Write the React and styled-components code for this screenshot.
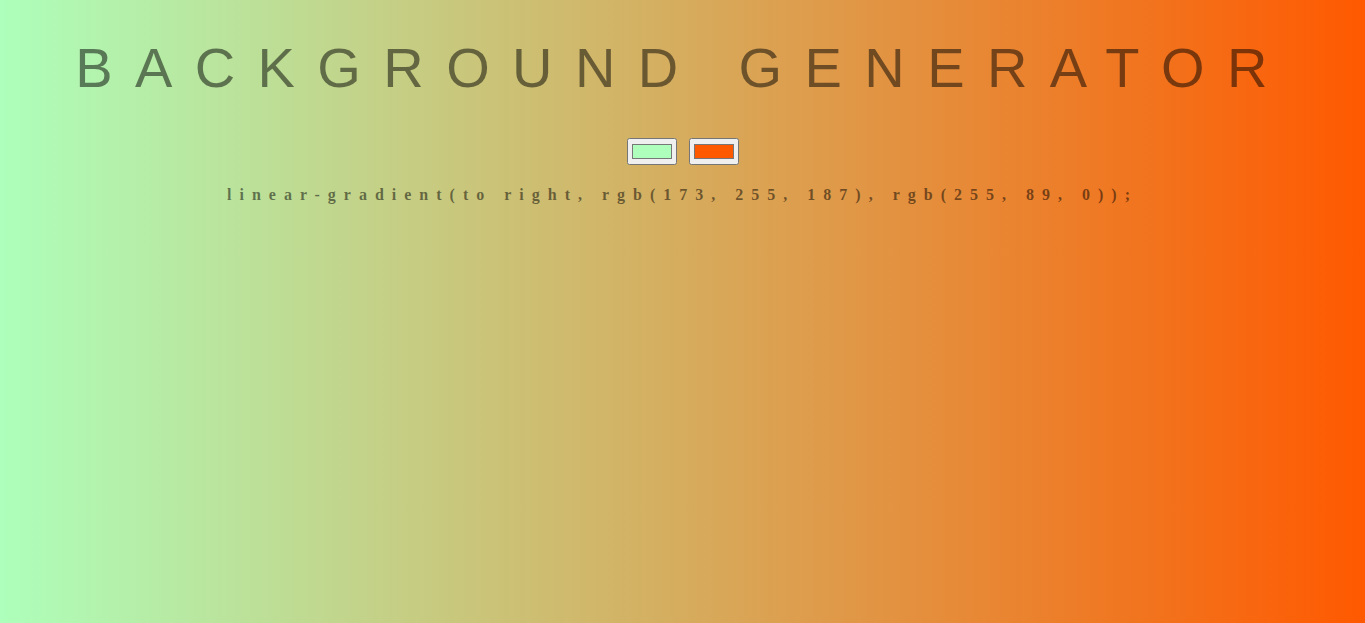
import React, { useState } from 'react';
import styled, { createGlobalStyle } from 'styled-components';

const GlobalStyle = createGlobalStyle`
    html, body {
        margin: 0;
        padding: 0;
    }
`;

const Page = styled.div`
    min-height: 100vh;
    box-sizing: border-box;
    padding: 36px 8px 0;
    display: flex;
    flex-direction: column;
    align-items: center;
    background: ${props => `linear-gradient(to right, ${props.$from}, ${props.$to})`};
`;

const Title = styled.h1`
    margin: 0;
    font: normal 56px/64px "Liberation Sans", Arial, sans-serif;
    letter-spacing: 0.4em;
    color: rgba(0, 0, 0, 0.5);
    text-align: center;
    white-space: nowrap;
`;

const Pickers = styled.div`
    display: flex;
    gap: 12px;
    margin-top: 38px;
`;

const ColorInput = styled.input`
    width: 50px;
    height: 27px;
    margin: 0;
`;

const Output = styled.h3`
    margin: 21px 0 0;
    font: bold 16px/18px "Liberation Serif", "Times New Roman", serif;
    letter-spacing: 0.5em;
    color: rgba(0, 0, 0, 0.5);
    text-align: center;
    white-space: nowrap;
`;

const toRgb = (hex) => {
    const n = parseInt(hex.slice(1), 16);
    return `rgb(${(n >> 16) & 255}, ${(n >> 8) & 255}, ${n & 255})`;
};

export default function App() {
    const [left, setLeft] = useState('#adffbb');
    const [right, setRight] = useState('#ff5900');

    const from = toRgb(left);
    const to = toRgb(right);

    return (
        <Page $from={from} $to={to}>
            <GlobalStyle />
            <Title>BACKGROUND GENERATOR</Title>
            <Pickers>
                <ColorInput type="color" value={left} onChange={e => setLeft(e.target.value)} />
                <ColorInput type="color" value={right} onChange={e => setRight(e.target.value)} />
            </Pickers>
            <Output>linear-gradient(to right, {from}, {to});</Output>
        </Page>
    );
}
